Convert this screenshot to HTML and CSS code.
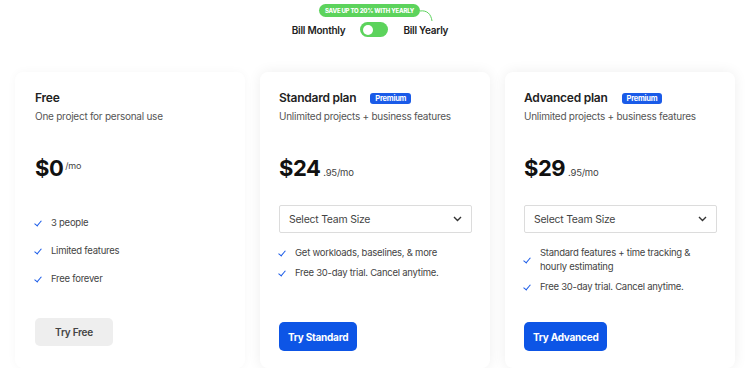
FILE: index.html
```html
<!DOCTYPE html>
<html lang="en">
<head>
    <meta charset="UTF-8">
    <title>Pricing</title>
    <link rel="stylesheet" href="styles.css">
</head>
<body>
    <header class="billing">
        <div class="save-wrap">
            <span class="save-pill">Save up to 20% with yearly</span>
            <!-- little hand-drawn arrow pointing at the yearly label -->
            <svg class="save-curve" width="16" height="14" viewBox="0 0 16 14">
                <path d="M0 3 C7 2, 11 6, 12 13" fill="none" stroke="#5cd35c" stroke-width="1"/>
            </svg>
        </div>
        <div class="billing-row">
            <span class="bill-label">Bill Monthly</span>
            <span class="toggle"><span class="knob"></span></span>
            <span class="bill-label">Bill Yearly</span>
        </div>
    </header>

    <div class="plans">
        <div class="card card-free">
            <h2 class="plan-name">Free</h2>
            <p class="plan-desc">One project for personal use</p>
            <div class="price"><span class="amount">$0</span><span class="per per-free">/mo</span></div>
            <ul class="features features-free">
                <li>3 people</li>
                <li>Limited features</li>
                <li>Free forever</li>
            </ul>
            <button class="btn btn-free">Try Free</button>
        </div>

        <div class="card">
            <h2 class="plan-name">Standard plan <span class="badge">Premium</span></h2>
            <p class="plan-desc">Unlimited projects + business features</p>
            <div class="price"><span class="amount">$24</span><span class="per">.95/mo</span></div>
            <div class="select">
                <span>Select Team Size</span>
                <svg width="9" height="6" viewBox="0 0 9 6"><path d="M1 1 L4.5 4.5 L8 1" fill="none" stroke="#333" stroke-width="1.4"/></svg>
            </div>
            <ul class="features">
                <li>Get workloads, baselines, &amp; more</li>
                <li>Free 30-day trial. Cancel anytime.</li>
            </ul>
            <button class="btn btn-blue">Try Standard</button>
        </div>

        <div class="card">
            <h2 class="plan-name">Advanced plan <span class="badge">Premium</span></h2>
            <p class="plan-desc">Unlimited projects + business features</p>
            <div class="price"><span class="amount">$29</span><span class="per">.95/mo</span></div>
            <div class="select">
                <span>Select Team Size</span>
                <svg width="9" height="6" viewBox="0 0 9 6"><path d="M1 1 L4.5 4.5 L8 1" fill="none" stroke="#333" stroke-width="1.4"/></svg>
            </div>
            <ul class="features">
                <li>Standard features + time tracking &amp;<br>hourly estimating</li>
                <li>Free 30-day trial. Cancel anytime.</li>
            </ul>
            <button class="btn btn-blue">Try Advanced</button>
        </div>
    </div>
</body>
</html>
```

FILE: styles.css
```css
body {
    margin: 0;
    background-color: #ffffff;
    font-family: Inter, "Noto Sans", sans-serif;
    letter-spacing: -0.25px;
    color: #222;
}
.billing {
    display: flex;
    flex-direction: column;
    align-items: center;
    padding-top: 4px;
    height: 72px;
    box-sizing: border-box;
}
.save-wrap {
    position: relative;
    display: flex;
    margin-left: -6px;
}
.save-pill {
    display: block;
    background-color: #5cd35c;
    color: #fff;
    font-size: 6px;
    font-weight: 800;
    text-transform: uppercase;
    letter-spacing: -0.2px;
    height: 13px;
    line-height: 13px;
    padding: 0 6px;
    border-radius: 7px;
}
.save-curve {
    position: absolute;
    left: 100%;
    top: 4px;
}
.billing-row {
    display: flex;
    align-items: center;
    gap: 15px;
    margin-top: 5px;
    margin-left: -5px;
}
.bill-label {
    font-size: 10px;
    font-weight: 600;
    color: #222;
}
.toggle {
    display: flex;
    align-items: center;
    width: 28px;
    height: 15px;
    border-radius: 8px;
    background-color: #5cd35c;
    padding: 0 3px;
    box-sizing: border-box;
}
.knob {
    width: 10px;
    height: 10px;
    border-radius: 50%;
    background-color: #fff;
}
.plans {
    display: flex;
    gap: 15px;
    padding: 0 10px 0 15px;
}
.card {
    width: 230px;
    min-height: 296px;
    box-sizing: border-box;
    padding: 18px 18px 17px 19px;
    background-color: #fff;
    border-radius: 8px;
    box-shadow: 0 0 14px rgba(0, 0, 0, 0.07);
    display: flex;
    flex-direction: column;
}
.card-free {
    box-shadow: 0 0 10px rgba(0, 0, 0, 0.035);
    padding-left: 20px;
}
.plan-name {
    margin: 0;
    font-size: 12px;
    font-weight: 600;
    line-height: 16px;
    color: #222;
    display: flex;
    align-items: center;
}
.badge {
    display: inline-block;
    margin-left: 14px;
    background-color: #1a5be8;
    color: #fff;
    font-size: 7.5px;
    font-weight: 700;
    line-height: 11px;
    padding: 0 5px;
    border-radius: 3px;
}
.plan-desc {
    margin: 3px 0 0;
    font-size: 10px;
    line-height: 14px;
    color: #555;
}
.price {
    margin-top: 35px;
    display: flex;
    align-items: baseline;
    line-height: 20px;
}
.amount {
    font-size: 22px;
    font-weight: 700;
    color: #111;
    letter-spacing: -0.5px;
}
.per {
    margin-left: 3px;
    font-size: 9.5px;
    color: #444;
}
.per-free {
    align-self: flex-start;
    margin-left: 2px;
    font-size: 9px;
    line-height: 16px;
}
.select {
    margin-top: 22px;
    height: 28px;
    box-sizing: border-box;
    border: 1px solid #dcdcdc;
    border-radius: 2px;
    display: flex;
    align-items: center;
    justify-content: space-between;
    padding: 0 9px 0 9px;
    font-size: 10.5px;
    color: #444;
}
.features {
    list-style: none;
    margin: 13px 0 0;
    padding: 0;
    display: flex;
    flex-direction: column;
    gap: 6px;
}
.features li {
    display: flex;
    align-items: center;
    font-size: 9.5px;
    line-height: 14px;
    color: #444;
}
.features li::before {
    content: "";
    flex: none;
    width: 3px;
    height: 6px;
    margin: 0 11px 2px 1px;
    border-right: 1.7px solid #1a5be8;
    border-bottom: 1.7px solid #1a5be8;
    transform: rotate(40deg);
}
.features-free {
    margin-top: 38px;
    gap: 14px;
}
.btn {
    margin-top: auto;
    align-self: flex-start;
    border: none;
    border-radius: 5px;
    font-family: inherit;
    letter-spacing: -0.25px;
    font-size: 10px;
    font-weight: 700;
    height: 29px;
    padding: 0 9px;
    cursor: pointer;
}
.btn-blue {
    background-color: #0d55e6;
    color: #fff;
}
.btn-free {
    background-color: #eeeeee;
    color: #444;
    font-weight: 600;
    width: 78px;
    height: 28px;
    margin-bottom: 5px;
}
```
